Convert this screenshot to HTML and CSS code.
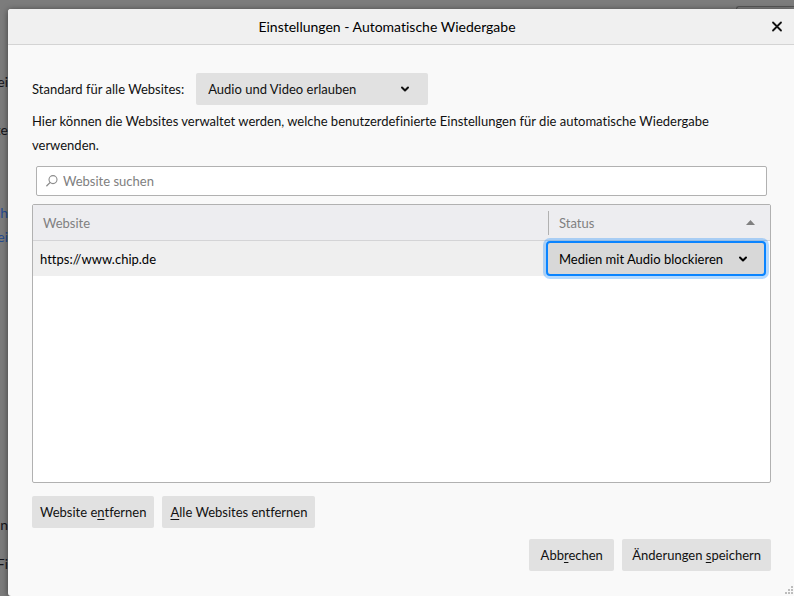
FILE: index.html
```html
<!DOCTYPE html>
<html lang="de">
<head>
<meta charset="utf-8">
<title>Einstellungen - Automatische Wiedergabe</title>
<meta name="viewport" content="width=device-width, initial-scale=1">
<link rel="stylesheet" href="styles.css">
</head>
<body>
<div class="page">
  <div class="backdrop">
    <span class="field-edge"></span>
    <span class="line line-a">ei</span>
    <span class="line line-b">te</span>
    <a class="line line-c" href="#">ch</a>
    <a class="line line-d" href="#">ei</a>
    <span class="line line-e">n</span>
    <span class="line line-f">Fi</span>
  </div>
  <section class="dialog" role="dialog" aria-labelledby="title">
    <header class="titlebar">
      <h1 class="title" id="title">Einstellungen - Automatische Wiedergabe</h1>
      <button class="close" type="button" aria-label="Schließen">
        <svg width="12" height="12" viewBox="0 0 12 12"><path d="M2 1.5l8 8M10 1.5l-8 8" fill="none" stroke="#111" stroke-width="1.8" stroke-linecap="round"/></svg>
      </button>
    </header>
    <div class="content">
      <div class="default-row">
        <label for="default">Standard für alle Websites:</label>
        <div class="dropdown dropdown-default">
          <select id="default"><option>Audio und Video erlauben</option></select>
          <svg class="chevron" width="10" height="8" viewBox="0 0 10 8"><path d="M2 2.5l3 3 3-3" fill="none" stroke="#111" stroke-width="2" stroke-linecap="round" stroke-linejoin="round"/></svg>
        </div>
      </div>
      <p class="description">Hier können die Websites verwaltet werden, welche benutzerdefinierte Einstellungen für die automatische Wiedergabe verwenden.</p>
      <div class="search">
        <svg width="12" height="12" viewBox="0 0 12 12"><circle cx="7" cy="4.6" r="4" fill="none" stroke="#8c8c8c" stroke-width="1.1"/><path d="M4 7.6L.8 10.8" stroke="#8c8c8c" stroke-width="1.3" stroke-linecap="round"/></svg>
        <input type="text" placeholder="Website suchen" aria-label="Website suchen">
      </div>
      <div class="list">
        <table>
          <thead>
            <tr>
              <th class="col-site" scope="col">Website</th>
              <th class="col-status" scope="col">
                <div class="status-head">Status<svg width="9" height="5" viewBox="0 0 9 5"><path d="M4.5 0L9 5H0z" fill="#808080"/></svg></div>
              </th>
            </tr>
          </thead>
          <tbody>
            <tr>
              <td class="site">https://www.chip.de</td>
              <td class="status">
                <div class="dropdown dropdown-focus">
                  <select aria-label="Status"><option>Medien mit Audio blockieren</option></select>
                  <svg class="chevron" width="10" height="8" viewBox="0 0 10 8"><path d="M2 2.5l3 3 3-3" fill="none" stroke="#000" stroke-width="2" stroke-linecap="round" stroke-linejoin="round"/></svg>
                </div>
              </td>
            </tr>
          </tbody>
        </table>
      </div>
      <div class="actions">
        <button class="button" type="button">Website e<u>n</u>tfernen</button>
        <button class="button" type="button"><u>A</u>lle Websites entfernen</button>
      </div>
      <div class="actions actions-end">
        <button class="button" type="button">Abb<u>r</u>echen</button>
        <button class="button" type="button">Änderungen <u>s</u>peichern</button>
      </div>
    </div>
    <svg class="grip" width="8" height="8" viewBox="0 0 8 8" fill="#bdbdbd"><path d="M6 0h2v2H6zM3 3h2v2H3zM6 3h2v2H6zM0 6h2v2H0zM3 6h2v2H3zM6 6h2v2H6z"/></svg>
  </section>
</div>
</body>
</html>
```
FILE: styles.css
```css
* {
  box-sizing: border-box;
}

body {
  margin: 0;
  font: 13px/24px Lato, "Noto Sans", sans-serif;
  font-variant-ligatures: none;
  color: #111;
}

button,
input,
select {
  font: inherit;
  font-variant-ligatures: none;
  color: inherit;
  margin: 0;
}

.page {
  display: grid;
  grid-template-columns: 8px 1fr;
  grid-template-rows: 9px 1fr;
  min-height: 100vh;
  overflow: hidden;
  background: #7c7c7c;
}

.backdrop {
  grid-area: 1 / 1 / 3 / 3;
  display: grid;
  grid-template-columns: 8px 1fr 58px;
  grid-template-rows: 70px 48px 83px 24px 288px 39px 1fr;
  font-size: 14px;
}

.field-edge {
  grid-area: 1 / 3;
  margin-top: 6px;
  border: 1px solid #555;
  border-width: 1px 0 0 1px;
  border-radius: 3px 0 0 0;
}

.line {
  grid-column: 1;
  display: flex;
  justify-content: flex-end;
  color: #15141a;
  text-decoration: none;
}

.line-a { grid-row: 2; }
.line-b { grid-row: 3; }
.line-c { grid-row: 4; }
.line-d { grid-row: 5; }
.line-e { grid-row: 6; }
.line-f { grid-row: 7; }

a.line {
  color: #234a90;
}

.dialog {
  grid-area: 2 / 2;
  position: relative;
  display: flex;
  flex-direction: column;
  background: #f9f9f9;
  border-radius: 3px 0 0 3px;
  box-shadow: 0 1px 6px rgba(0, 0, 0, 0.5);
}

.titlebar {
  display: flex;
  align-items: center;
  height: 36px;
  background: #f0f0f0;
  border-bottom: 1px solid #d4d4d4;
  border-radius: 3px 0 0 0;
}

.title {
  flex: 1;
  margin: 0;
  font-size: 14px;
  font-weight: 400;
  text-align: center;
  color: #000;
}

.close {
  display: flex;
  padding: 5px;
  margin-right: 6px;
  border: 0;
  background: none;
}

.content {
  flex: 1;
  display: flex;
  flex-direction: column;
  padding: 28px 23px 25px 24px;
}

.default-row {
  display: flex;
  align-items: center;
  gap: 12px;
}

.dropdown {
  display: grid;
  align-items: center;
}

.dropdown select {
  grid-area: 1 / 1;
  width: 100%;
  height: 32px;
  padding: 0 36px 0 12px;
  border: 0;
  border-radius: 2px;
  background: #e1e1e1;
  appearance: none;
}

.dropdown-default {
  width: 232px;
}

.chevron {
  grid-area: 1 / 1;
  justify-self: end;
  margin-right: 18px;
  pointer-events: none;
}

.dropdown-focus select {
  height: 35px;
  padding: 0 32px 0 11px;
  border: 2px solid #0a84ff;
  border-radius: 4px;
  background: #d8d8d8;
  color: #000;
  box-shadow: 0 0 0 3px rgba(10, 132, 255, 0.3);
}

.description {
  margin: 4px 0 9px;
}

.search {
  display: flex;
  align-items: center;
  gap: 5px;
  height: 30px;
  margin: 0 4px 8px;
  padding: 0 9px;
  border: 1px solid #b1b1b1;
  border-radius: 2px;
  background: #fff;
}

.search input {
  flex: 1;
  padding: 0;
  border: 0;
  outline: 0;
  background: none;
}

.search input::placeholder {
  color: #808080;
  opacity: 1;
}

.list {
  flex: 1;
  min-height: 160px;
  border: 1px solid #b1b1b1;
  border-radius: 2px;
  background: #fff;
}

table {
  width: 100%;
  border-collapse: separate;
  border-spacing: 0;
}

th,
td {
  padding: 0;
  text-align: left;
  font-weight: 400;
}

th {
  height: 36px;
  color: #808080;
  background: #ededf0;
  border-bottom: 1px solid #d4d4d6;
}

.col-site {
  padding-left: 10px;
}

.col-status {
  width: 224px;
}

.status-head {
  display: flex;
  align-items: center;
  justify-content: space-between;
  margin-left: 2px;
  padding: 0 15px 0 10px;
  border-left: 1px solid #b1b1b1;
}

.site {
  padding-left: 7px;
  color: #000;
  background: #efefef;
}

.status {
  padding-right: 4px;
}

.actions {
  display: flex;
  gap: 8px;
  margin-top: 13px;
}

.actions-end {
  justify-content: flex-end;
  margin-top: 11px;
}

.button {
  height: 32px;
  padding: 0 8px;
  border: 0;
  border-radius: 2px;
  background: #e1e1e1;
}

.actions-end .button {
  padding: 0 10px;
  min-width: 85px;
}

.button u {
  text-underline-offset: 2px;
}

.grip {
  position: absolute;
  right: 1px;
  bottom: 2px;
}
```
